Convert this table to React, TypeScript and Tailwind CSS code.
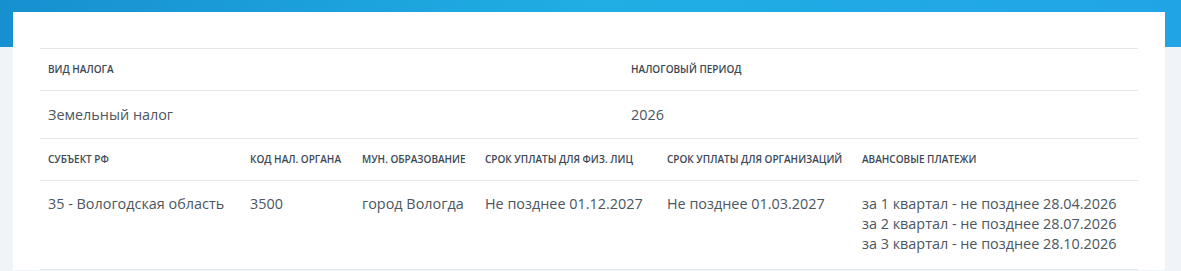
const font = { fontFamily: '"Open Sans", "Noto Sans", sans-serif' };

const subjects = [
  { label: "Субъект РФ", w: "w-[202px]" },
  { label: "Код нал. органа", w: "w-[112px]" },
  { label: "Мун. образование", w: "w-[123px]" },
  { label: "Срок уплаты для физ. лиц", w: "w-[182px]" },
  { label: "Срок уплаты для организаций", w: "w-[195px]" },
  { label: "Авансовые платежи", w: "flex-1" },
];

const advances = [
  "за 1 квартал - не позднее 28.04.2026",
  "за 2 квартал - не позднее 28.07.2026",
  "за 3 квартал - не позднее 28.10.2026",
];

const Th = ({ children, className = "" }: { children: React.ReactNode; className?: string }) => (
  <div className={`px-2 flex items-center text-[10px] font-semibold uppercase text-[#3b4754] ${className}`}>
    {children}
  </div>
);

export default function App() {
  return (
    <div style={font} className="min-h-[271px] bg-[#f0f3f7] relative overflow-hidden">
      <div className="h-[47px] bg-gradient-to-r from-[#1790d0] via-[#20aee4] to-[#21a4e6]" />
      <div className="-mt-[35px] mx-[13px] w-[1152px] bg-white px-[27px] pt-[36px] relative">
        <div className="border-t border-[#e5e7ea]">
          {/* period */}
          <div className="flex h-[42px] border-b border-[#e5e7ea]">
            <Th className="w-[583px]">Вид налога</Th>
            <Th>Налоговый период</Th>
          </div>
          <div className="flex h-[48px] border-b border-[#e5e7ea] text-[14.4px] text-[#4b5661]">
            <div className="w-[583px] px-2 flex items-center">Земельный налог</div>
            <div className="px-2 flex items-center">2026</div>
          </div>

          {/* region */}
          <div className="flex h-[42px] border-b border-[#e5e7ea]">
            {subjects.map((s) => (
              <Th key={s.label} className={s.w}>
                {s.label}
              </Th>
            ))}
          </div>
          <div className="flex h-[89px] border-b border-[#e5e7ea] text-[14.4px] leading-[20px] text-[#4b5661] pt-[13px]">
            <div className="w-[202px] px-2">35 - Вологодская область</div>
            <div className="w-[112px] px-2">3500</div>
            <div className="w-[123px] px-2">город Вологда</div>
            <div className="w-[182px] px-2">Не позднее 01.12.2027</div>
            <div className="w-[195px] px-2">Не позднее 01.03.2027</div>
            <div className="flex-1 px-2">
              {advances.map((a) => (
                <div key={a}>{a}</div>
              ))}
            </div>
          </div>
        </div>
      </div>
    </div>
  );
}
